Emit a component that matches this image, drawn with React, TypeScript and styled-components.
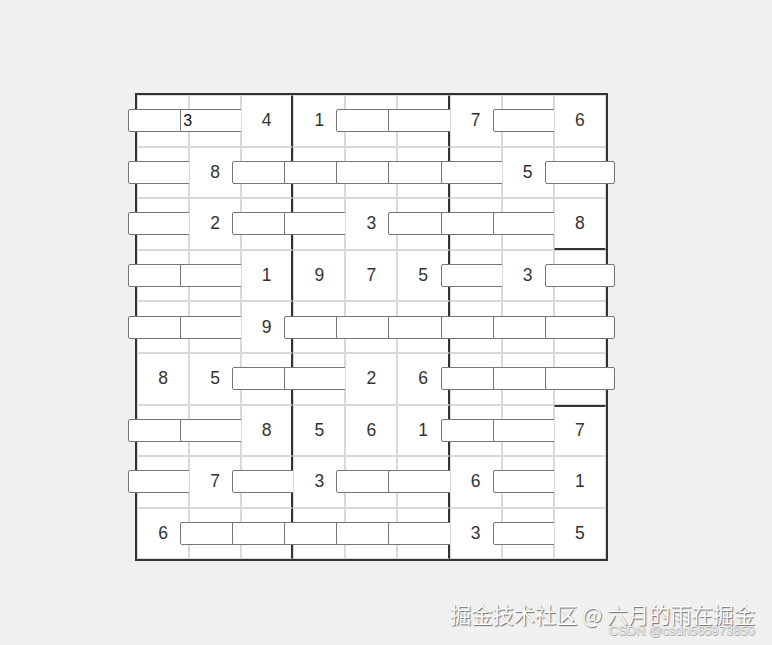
import React from "react";
import styled, { createGlobalStyle } from "styled-components";

const GlobalStyle = createGlobalStyle`
  html, body {
    margin: 0;
    padding: 0;
    background: #f0f0f0;
    font-family: "Liberation Sans", Arial, sans-serif;
  }
`;

const Page = styled.div`
  position: relative;
  box-sizing: border-box;
  width: 772px;
  height: 645px;
  padding: 93px 0 0 135px;
  overflow: hidden;
`;

const Board = styled.div`
  display: grid;
  width: max-content;
  grid-template-columns: repeat(9, 52.1px);
  grid-template-rows: repeat(9, 51.6px);
  border: 2px solid #333;
  border-bottom-width: 2.5px;
  background: #fff;
`;

const Cell = styled.div<{ $darkRight?: boolean; $darkBottom?: boolean; $darkTop?: boolean }>`
  box-sizing: border-box;
  min-width: 0;
  display: flex;
  align-items: center;
  justify-content: center;
  background: #fff;
  border: 1px solid #d9d9d9;
  ${(p) => (p.$darkRight ? "border-right: 2px solid #333;" : "")}
  ${(p) => (p.$darkBottom ? "border-bottom: 2px solid #333;" : "")}
  ${(p) => (p.$darkTop ? "border-top: 2px solid #333;" : "")}
  font-size: 17.5px;
  color: #333;
`;

const CellInput = styled.input`
  flex-shrink: 0;
  box-sizing: border-box;
  width: 70px;
  height: 23px;
  margin: 0;
  padding: 0 2px;
  border: 1px solid #767676;
  border-radius: 2px;
  background: #fff;
  font-family: "Liberation Sans", Arial, sans-serif;
  font-size: 16px;
  line-height: 21px;
  color: #111;
  outline: none;
`;

const Watermark = styled.div`
  position: absolute;
  right: 17px;
  top: 600px;
  display: flex;
  flex-direction: column;
  align-items: flex-end;
  pointer-events: none;
`;

const WatermarkMain = styled.div`
  font-family: "Noto Sans CJK SC", "Liberation Sans", sans-serif;
  font-size: 21.2px;
  line-height: 27px;
  color: #ffffff;
  text-shadow: 1px 1px 1px rgba(0, 0, 0, 0.55), -0.5px -0.5px 0 rgba(0, 0, 0, 0.15);
`;

const WatermarkSub = styled.div`
  margin-top: -4px;
  font-family: "Liberation Sans", Arial, sans-serif;
  font-size: 13px;
  line-height: 16px;
  color: #f4f4f4;
  text-shadow: 0 0 1px #8a8a8a, 0.5px 0.5px 0 #aaa;
`;

const puzzle: number[][] = [
  [0, 0, 4, 1, 0, 0, 7, 0, 6],
  [0, 8, 0, 0, 0, 0, 0, 5, 0],
  [0, 2, 0, 0, 3, 0, 0, 0, 8],
  [0, 0, 1, 9, 7, 5, 0, 3, 0],
  [0, 0, 9, 0, 0, 0, 0, 0, 0],
  [8, 5, 0, 0, 2, 6, 0, 0, 0],
  [0, 0, 8, 5, 6, 1, 0, 0, 7],
  [0, 7, 0, 3, 0, 0, 6, 0, 1],
  [6, 0, 0, 0, 0, 0, 3, 0, 5],
];

const entered: Record<string, string> = { "0-1": "3" };

export default function App() {
  return (
    <>
      <GlobalStyle />
      <Page>
        <Board>
          {puzzle.map((row, r) =>
            row.map((v, c) => (
              <Cell
                key={`${r}-${c}`}
                $darkRight={c === 2 || c === 5}
                $darkBottom={r === 2 && c === 8}
                $darkTop={r === 6 && c === 8}
              >
                {v ? v : <CellInput type="text" defaultValue={entered[`${r}-${c}`] ?? ""} />}
              </Cell>
            ))
          )}
        </Board>
        <Watermark>
          <WatermarkMain>掘金技术社区 @ 六月的雨在掘金</WatermarkMain>
          <WatermarkSub>CSDN @csdn565973850</WatermarkSub>
        </Watermark>
      </Page>
    </>
  );
}
